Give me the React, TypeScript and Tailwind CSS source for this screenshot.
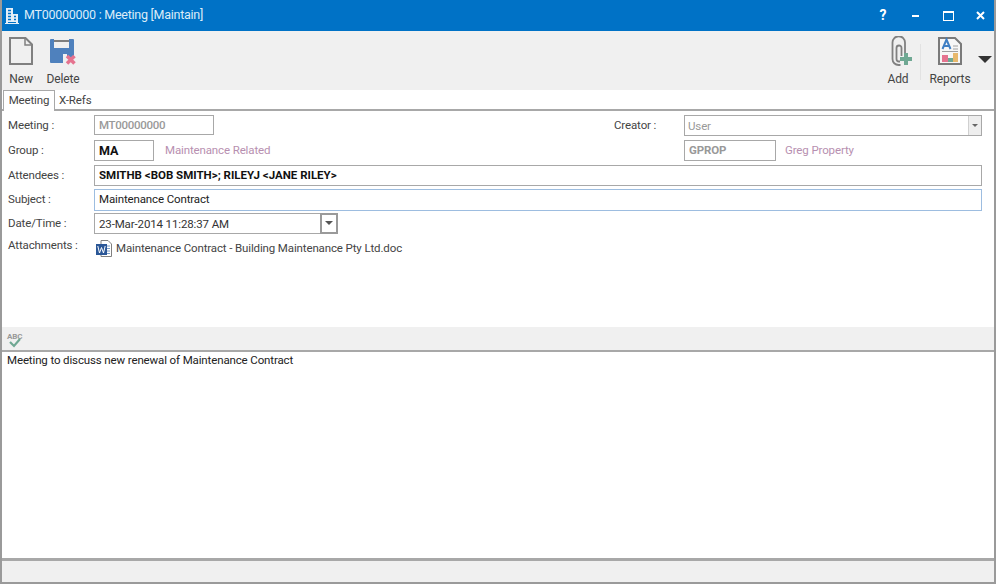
const font = "[font-family:Roboto,sans-serif]"

function ToolButton({ label, icon, width }: { label: string; icon: React.ReactNode; width: string }) {
  return (
    <div className={`flex flex-col items-center ${width}`}>
      <div className="h-[32px] flex items-center justify-center">{icon}</div>
      <span className="mt-[4px] text-[12px] leading-[16px] text-[#444]">{label}</span>
    </div>
  )
}

function NewIcon() {
  return (
    <svg width="24" height="28" viewBox="0 0 24 28" fill="none" stroke="#808080" strokeWidth="2">
      <path d="M1 1H16.500L23 7.500V27H1Z" />
      <path d="M16 1V8H23" strokeWidth="1.500" />
    </svg>
  )
}

function DeleteIcon() {
  return (
    <svg className="mt-[1px]" width="26" height="26" viewBox="0 0 26 26">
      <path d="M0 1a1 1 0 0 1 1-1h22a1 1 0 0 1 1 1v18h-7l-4 5H1a1 1 0 0 1-1-1Z" fill="#4f81bd" />
      <rect x="4" y="0" width="15" height="9" fill="#f0f0f0" />
      <rect x="4" y="1" width="15" height="2" fill="#7f7f7f" />
      <rect x="13" y="15" width="4" height="9" fill="#f0f0f0" />
      <path d="M17 17l7.500 7.500M24.500 17l-7.500 7.500" stroke="#e5738f" strokeWidth="3.500" />
    </svg>
  )
}

function AddIcon() {
  return (
    <svg className="ml-[7px]" width="21" height="30" viewBox="0 0 21 30" fill="none">
      <path d="M14 18V6.500a6.250 6.250 0 0 0-12.500 0V23a6 6 0 0 0 6 6h2" stroke="#808080" strokeWidth="1.800" />
      <path d="M10.500 20V12a2.500 2.500 0 0 0-5 0V23a2.500 2.500 0 0 0 2.500 2.500h1" stroke="#808080" strokeWidth="1.800" />
      <path d="M13 17h4v4h4v4h-4v4h-4v-4H9v-4h4Z" fill="#6fa893" />
    </svg>
  )
}

function ReportsIcon() {
  return (
    <svg width="24" height="28" viewBox="0 0 24 28" fill="none">
      <path d="M1 1H17L23 7V27H1Z" fill="#f7f7f7" stroke="#7a7a7a" strokeWidth="2" />
      <path d="M4.500 12L8.500 2.500L12.500 12M6 9H11" stroke="#3f7fc4" strokeWidth="2" />
      <path d="M15 9h5M15 12h5M4 14.500h16" stroke="#a0a0a0" strokeWidth="1" />
      <rect x="4" y="18" width="6" height="7" fill="#e5738f" />
      <rect x="10" y="21" width="5" height="4" fill="#6fa893" />
      <rect x="15" y="16" width="5" height="9" fill="#e8b86c" />
    </svg>
  )
}

function BuildingIcon() {
  return (
    <svg width="14" height="16" viewBox="0 0 14 16">
      <path d="M1 0H8V6H13V15H14V16H0V15H1Z" fill="#e4eff8" />
      <path d="M3 2.500h3M3 5.500h3M3 8.500h3M3 11.500h3M9 8.500h2M9 11.500h2" stroke="#0072c6" strokeWidth="1.300" />
      <path d="M3 14.500h8" stroke="#0072c6" strokeWidth="1" />
    </svg>
  )
}

function Label({ children, className = "" }: { children: React.ReactNode; className?: string }) {
  return <div className={`w-[86px] shrink-0 text-[11.5px] leading-[20px] text-[#444] ${className}`}>{children}</div>
}

function WordIcon() {
  return (
    <svg width="16" height="17" viewBox="0 0 16 17">
      <path d="M5 .500H12L15.500 4V16.500H5Z" fill="#fff" stroke="#808080" />
      <path d="M11 6h3M11 8.500h3M11 11h3M11 13.500h3" stroke="#7a9cc6" />
      <rect x="0" y="4" width="11" height="11" fill="#2b5797" />
      <path d="M1.800 6l1.700 7 2-5.500 2 5.500 1.700-7" fill="none" stroke="#fff" strokeWidth="1" />
    </svg>
  )
}

function SpellIcon() {
  return (
    <div className="relative w-[16px] h-[18px]">
      <span className="absolute left-0 top-[2px] text-[8px] leading-[9px] font-bold text-[#999]">ABC</span>
      <svg className="absolute left-[1px] top-[8px]" width="14" height="10" viewBox="0 0 14 10" fill="none">
        <path d="M2 4l4 4 6-7" stroke="#6fa893" strokeWidth="2.200" />
      </svg>
    </div>
  )
}

export default function App() {
  return (
    <div className={`${font} tracking-[-0.13px] w-[996px] h-[584px] flex flex-col bg-white border-x-2 border-b-2 border-[#9a9a9a] overflow-hidden`}>
      {/* title bar */}
      <div className="-mx-[2px] h-[31px] shrink-0 bg-[#0072c6] flex items-center pl-[5px] text-white">
        <BuildingIcon />
        <span className="ml-[5px] text-[12.5px] tracking-[-0.26px] text-[#dcecf8]">MT00000000 : Meeting [Maintain]</span>
        <div className="ml-auto flex items-center">
          <span className="w-[30px] text-center text-[14px] font-bold">?</span>
          <span className="w-[34px] flex justify-center"><span className="w-[7px] h-[2px] bg-white" /></span>
          <span className="w-[32px] flex justify-center"><span className="w-[11px] h-[10px] border border-white border-t-[2px]" /></span>
          <span className="w-[32px] flex justify-center">
            <svg width="9" height="9" viewBox="0 0 9 9"><path d="M1 1l7 7M8 1l-7 7" stroke="#fff" strokeWidth="2" /></svg>
          </span>
        </div>
      </div>

      {/* toolbar */}
      <div className="h-[59px] shrink-0 bg-[#f0f0f0] flex pt-[4px] pl-[2px]">
        <ToolButton label="New" width="w-[34px]" icon={<NewIcon />} />
        <ToolButton label="Delete" width="w-[50px]" icon={<DeleteIcon />} />
        <div className="ml-auto flex">
          <ToolButton label="Add" width="w-[40px]" icon={<AddIcon />} />
          <div className="w-px h-[36px] mt-[9px] ml-[2px] mr-[3px] bg-[#e2e2e2]" />
          <ToolButton label="Reports" width="w-[52px]" icon={<ReportsIcon />} />
          <div className="w-[18px] flex justify-center pt-[21px]">
            <span className="w-0 h-0 border-x-[7px] border-x-transparent border-t-[7px] border-t-[#333]" />
          </div>
        </div>
      </div>

      {/* tabs */}
      <div className="h-[21px] shrink-0 flex pl-[1px] border-b-2 border-[#a8a8a8] text-[11.5px] text-[#444]">
        <div className="h-[21px] w-[52px] border-x border-t border-[#a8a8a8] bg-white flex items-center justify-center">Meeting</div>
        <div className="px-[4px] leading-[20px]">X-Refs</div>
      </div>

      {/* form */}
      <div className="h-[216px] shrink-0 pt-[4px] pl-[6px] pr-[12px] flex flex-col text-[11.5px]">
        <div className="flex h-[20px] items-center">
          <Label>Meeting :</Label>
          <div className="w-[120px] h-[20px] border border-[#a8a8a8] pl-[4px] leading-[18px] tracking-[-0.3px] text-[#999] font-medium">MT00000000</div>
          <span className="ml-[400px] w-[70px] text-[#444] leading-[18px]">Creator :</span>
          <div className="flex-1 h-[21px] border border-[#a8a8a8] pl-[3px] leading-[21px] text-[#999] flex justify-between">
            User
            <span className="w-[13px] border-l border-[#d0d0d0] bg-[#eee] flex items-center justify-center">
              <span className="w-0 h-0 border-x-[3px] border-x-transparent border-t-[3px] border-t-[#666]" />
            </span>
          </div>
        </div>
        <div className="mt-[5px] flex h-[20px] items-center">
          <Label>Group :</Label>
          <div className="w-[60px] h-[21px] border border-[#a8a8a8] pl-[4px] leading-[19px] font-bold text-[12.5px] text-[#111]">MA</div>
          <span className="ml-[11px] text-[#b78fb0] leading-[20px]">Maintenance Related</span>
          <div className="ml-auto flex items-center w-[298px]">
            <div className="w-[92px] h-[21px] border border-[#a8a8a8] pl-[4px] leading-[18px] font-bold text-[#999]">GPROP</div>
            <span className="ml-[9px] text-[#b78fb0] leading-[20px]">Greg Property</span>
          </div>
        </div>
        <div className="mt-[5px] flex h-[20px] items-center">
          <Label>Attendees :</Label>
          <div className="flex-1 h-[21px] border border-[#a8a8a8] pl-[4px] leading-[19px] tracking-normal font-bold text-[#111]">{"SMITHB <BOB SMITH>; RILEYJ <JANE RILEY>"}</div>
        </div>
        <div className="mt-[4px] flex h-[21px] items-center">
          <Label className="-translate-y-px">Subject :</Label>
          <div className="flex-1 h-[22px] border border-[#9dbde0] pl-[4px] leading-[18px] text-[#222]">Maintenance Contract</div>
        </div>
        <div className="mt-[3px] flex h-[20px] items-center">
          <Label>Date/Time :</Label>
          <div className="w-[244px] h-[21px] border border-[#a8a8a8] pl-[4px] leading-[21px] text-[#333] flex justify-between">
            23-Mar-2014 11:28:37 AM
            <span className="w-[18px] border-2 border-[#9a9a9a] -my-px -mr-px bg-white flex items-center justify-center">
              <span className="w-0 h-0 border-x-[4px] border-x-transparent border-t-[4px] border-t-[#555]" />
            </span>
          </div>
        </div>
        <div className="mt-[2px] flex items-start">
          <Label>Attachments :</Label>
          <div className="flex items-center mt-[4px] ml-[2px] text-[#444] leading-[18px]">
            <WordIcon />
            <span className="ml-[4px]">Maintenance Contract - Building Maintenance Pty Ltd.doc</span>
          </div>
        </div>
      </div>

      {/* spell check strip */}
      <div className="h-[25px] shrink-0 bg-[#f0f0f0] flex items-center pl-[5px] border-b-2 border-[#a8a8a8]">
        <SpellIcon />
      </div>

      {/* notes */}
      <div className="flex-1 pl-[5px] text-[11.5px] leading-[16px] text-[#222]">Meeting to discuss new renewal of Maintenance Contract</div>

      {/* status bar */}
      <div className="h-[24px] shrink-0 bg-[#f0f0f0] border-t-[3px] border-[#a8a8a8]" />
    </div>
  )
}
